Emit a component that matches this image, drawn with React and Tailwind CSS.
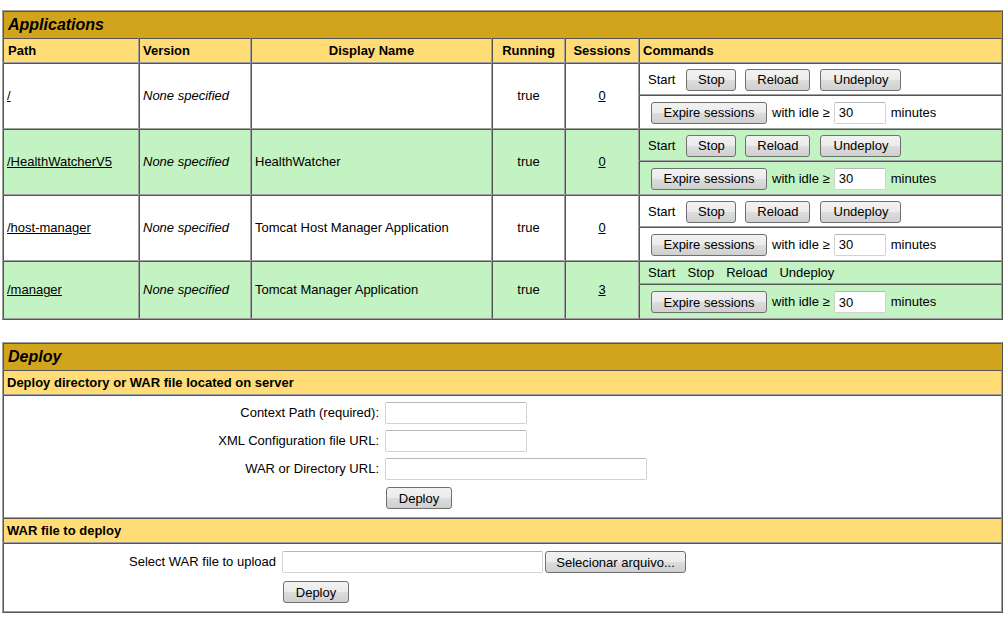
import React from "react";

const cellB =
  "border border-t-[#555555] border-l-[#555555] border-r-[#a0a0a0] border-b-[#a0a0a0]";
const tableB =
  "border border-t-[#a0a0a0] border-l-[#a0a0a0] border-r-[#555555] border-b-[#555555]";
const btnC =
  "h-[22px] flex items-center justify-center rounded-[3px] border border-[#707070] bg-[linear-gradient(to_bottom,#f2f2f2,#ebebeb_50%,#dddddd_51%,#cfcfcf)] text-[13px] text-black leading-none shrink-0";
const inpC =
  "h-[22px] border border-[#d2d2d2] border-t-[#b5b7bd] bg-white rounded-[2px] text-[13px] pl-[4px] outline-none shrink-0";

function Btn({ w, className = "", children }) {
  return (
    <button type="button" className={`${btnC} ${w} ${className}`}>
      {children}
    </button>
  );
}

const apps = [
  { path: "/", disp: "", sessions: "0", green: false, buttons: true },
  { path: "/HealthWatcherV5", disp: "HealthWatcher", sessions: "0", green: true, buttons: true },
  { path: "/host-manager", disp: "Tomcat Host Manager Application", sessions: "0", green: false, buttons: true },
  { path: "/manager", disp: "Tomcat Manager Application", sessions: "3", green: true, buttons: false },
];

function AppRows({ a }) {
  const bg = a.green ? "bg-[#c3f3c3]" : "bg-white";
  const base = `${cellB} ${bg} flex items-center px-[3px]`;
  return (
    <>
      <div className={`${base} row-span-2`}>
        <span className="underline">{a.path}</span>
      </div>
      <div className={`${base} row-span-2 italic`}>None specified</div>
      <div className={`${base} row-span-2`}>{a.disp}</div>
      <div className={`${base} row-span-2 justify-center`}>true</div>
      <div className={`${base} row-span-2 justify-center`}>
        <span className="underline">{a.sessions}</span>
      </div>
      {a.buttons ? (
        <div className={`${cellB} ${bg} flex items-center pl-[8px] pt-[1px]`}>
          <span>Start</span>
          <Btn w="w-[50px]" className="ml-[11px]">Stop</Btn>
          <Btn w="w-[65px]" className="ml-[9px]">Reload</Btn>
          <Btn w="w-[81px]" className="ml-[10px]">Undeploy</Btn>
        </div>
      ) : (
        <div className={`${cellB} ${bg} flex items-center pl-[8px] gap-[12px] pt-[1px]`}>
          <span>Start</span>
          <span>Stop</span>
          <span>Reload</span>
          <span>Undeploy</span>
        </div>
      )}
      <div className={`${cellB} ${bg} flex items-center pl-[11px] pt-[1px]`}>
        <Btn w="w-[116px]">Expire sessions</Btn>
        <span className="ml-[5px] whitespace-nowrap">with idle ≥</span>
        <input className={`${inpC} w-[52px] ml-[4px]`} defaultValue="30" />
        <span className="ml-[5px]">minutes</span>
      </div>
    </>
  );
}

export default function App() {
  return (
    <div className="font-['Liberation_Sans',Arial,sans-serif] text-[13px] text-black bg-white w-[1007px] h-[623px] overflow-hidden pt-[10px] pl-[2px]">
      {/* Applications */}
      <div className={`${tableB} w-[1001px]`}>
        <div className="grid grid-cols-[136px_112px_241px_73px_74px_363px] grid-rows-[27px_25px_32px_34px_32px_34px_32px_34px_23px_35px]">
          <div className={`${cellB} col-span-6 bg-[#d2a41c] flex items-center px-[4px] pt-[1px] text-[16px] font-bold italic`}>
            Applications
          </div>
          <div className={`${cellB} bg-[#ffdc75] flex items-center px-[4px] pt-[1px] font-bold`}>Path</div>
          <div className={`${cellB} bg-[#ffdc75] flex items-center px-[3px] pt-[1px] font-bold`}>Version</div>
          <div className={`${cellB} bg-[#ffdc75] flex items-center justify-center px-[3px] pt-[1px] font-bold`}>Display Name</div>
          <div className={`${cellB} bg-[#ffdc75] flex items-center justify-center px-[3px] pt-[1px] font-bold`}>Running</div>
          <div className={`${cellB} bg-[#ffdc75] flex items-center justify-center px-[3px] pt-[1px] font-bold`}>Sessions</div>
          <div className={`${cellB} bg-[#ffdc75] flex items-center px-[3px] pt-[1px] font-bold`}>Commands</div>
          {apps.map((a) => (
            <AppRows key={a.path} a={a} />
          ))}
        </div>
      </div>

      {/* Deploy */}
      <div className={`${tableB} w-[1001px] mt-[22px] flex flex-col`}>
        <div className={`${cellB} h-[27px] bg-[#d2a41c] flex items-center px-[4px] pt-[1px] text-[16px] font-bold italic`}>
          Deploy
        </div>
        <div className={`${cellB} h-[25px] bg-[#ffdc75] flex items-center px-[3px] pt-[1px] font-bold`}>
          Deploy directory or WAR file located on server
        </div>
        <div className={`${cellB} h-[123px] bg-white flex flex-col pt-[6px] gap-[6px]`}>
          <div className="flex items-center">
            <span className="w-[375px] text-right">Context Path (required):</span>
            <input className={`${inpC} w-[142px] ml-[6px]`} />
          </div>
          <div className="flex items-center">
            <span className="w-[375px] text-right">XML Configuration file URL:</span>
            <input className={`${inpC} w-[142px] ml-[6px]`} />
          </div>
          <div className="flex items-center">
            <span className="w-[375px] text-right">WAR or Directory URL:</span>
            <input className={`${inpC} w-[262px] ml-[6px]`} />
          </div>
          <div className="flex items-center mt-[1px]">
            <span className="w-[375px]" />
            <Btn w="w-[66px]" className="ml-[7px]">Deploy</Btn>
          </div>
        </div>
        <div className={`${cellB} h-[25px] bg-[#ffdc75] flex items-center px-[3px] pt-[1px] font-bold`}>
          WAR file to deploy
        </div>
        <div className={`${cellB} h-[69px] bg-white flex flex-col pt-[7px] gap-[8px]`}>
          <div className="flex items-center">
            <span className="w-[272px] text-right">Select WAR file to upload</span>
            <div className={`${inpC} w-[261px] ml-[6px]`} />
            <Btn w="w-[141px]" className="ml-[2px]">Selecionar arquivo...</Btn>
          </div>
          <div className="flex items-center">
            <span className="w-[272px]" />
            <Btn w="w-[66px]" className="ml-[7px]">Deploy</Btn>
          </div>
        </div>
      </div>
    </div>
  );
}
